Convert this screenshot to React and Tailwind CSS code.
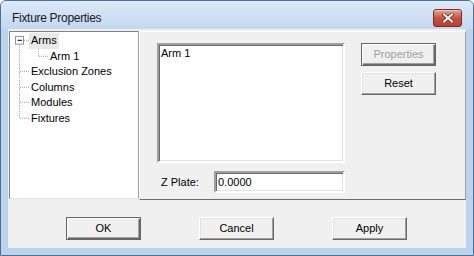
import React from "react";

// dotted connector drawn at the left of each tree row
const Connector = ({ kind }) => {
  const dot = { stroke: "#a0a0a0", strokeWidth: 1, strokeDasharray: "1 1", shapeRendering: "crispEdges" };
  if (kind === "root") {
    return (
      <svg width="19" height="16" viewBox="0 0 19 16" preserveAspectRatio="none" className="h-full shrink-0">
        <line x1="9.5" y1="12" x2="9.5" y2="16" style={dot} />
        <line x1="14" y1="7.5" x2="19" y2="7.5" style={dot} />
        <rect x="5.5" y="3.5" width="8" height="8" fill="white" stroke="#919191" shapeRendering="crispEdges" />
        <line x1="7.5" y1="7.5" x2="12" y2="7.5" stroke="black" shapeRendering="crispEdges" />
      </svg>
    );
  }
  if (kind === "child") {
    return (
      <svg width="38" height="16" viewBox="0 0 38 16" preserveAspectRatio="none" className="h-full shrink-0">
        <line x1="9.5" y1="0" x2="9.5" y2="16" style={dot} />
        <line x1="28.5" y1="0" x2="28.5" y2="8" style={dot} />
        <line x1="29" y1="7.5" x2="38" y2="7.5" style={dot} />
      </svg>
    );
  }
  return (
    <svg width="19" height="16" viewBox="0 0 19 16" preserveAspectRatio="none" className="h-full shrink-0">
      <line x1="9.5" y1="0" x2="9.5" y2={kind === "last" ? 8 : 16} style={dot} />
      <line x1="10" y1="7.5" x2="19" y2="7.5" style={dot} />
    </svg>
  );
};

const TreeRow = ({ kind, label, selected }) => (
  <div className="flex items-stretch h-[15.6px]">
    <Connector kind={kind} />
    <span className={"px-[2px] leading-[15.6px] whitespace-nowrap " + (selected ? "bg-[#e8e8e8]" : "")}>{label}</span>
  </div>
);

const Button = ({ children, disabled, isDefault }) => (
  <button
    className={
      "w-[75px] h-[23px] bg-[#f0f0f0] text-[11px] leading-none flex items-center justify-center " +
      (isDefault
        ? "border border-[#646464] shadow-[inset_1px_1px_0_#fff,inset_-1px_-1px_0_#696969,inset_-2px_-2px_0_#a0a0a0]"
        : "border border-t-white border-l-white border-b-[#696969] border-r-[#696969] shadow-[inset_-1px_-1px_0_#a0a0a0,inset_1px_1px_0_#e3e3e3]") +
      (disabled ? " text-[#a0a0a0]" : " text-black")
    }
  >
    {children}
  </button>
);

const sunken =
  "bg-white border-2 border-t-[#a0a0a0] border-l-[#a0a0a0] border-b-white border-r-white shadow-[inset_1px_1px_0_#696969,inset_-1px_-1px_0_#e3e3e3]";

const App = () => {
  return (
    <div className="w-[474px] h-[256px] flex flex-col bg-[#bcd3ed] border border-[#4f6f94] rounded-t-[6px] overflow-hidden font-['Liberation_Sans',Arial,sans-serif] text-[11px] text-black">
      {/* title bar */}
      <div className="h-[28px] shrink-0 flex items-start justify-between pl-[11px] pr-[11px] bg-gradient-to-b from-[#dce9f7] to-[#c3d8f0]">
        <span className="pt-[10px] text-[12px] leading-[15px] tracking-[-0.3px] text-[#1a1a1a]">Fixture Properties</span>
        <div className="mt-[8px] w-[29px] h-[18px] rounded-[3px] border border-[#7b2d25] bg-gradient-to-b from-[#e6a397] via-[#cc4f40] to-[#b8412f] flex items-center justify-center shadow-[inset_0_1px_0_#f2c3bb]">
          <svg width="12" height="10" viewBox="0 0 12 10">
            <path d="M2 1.5 L10 8.5 M10 1.5 L2 8.5" stroke="#6b2f29" strokeWidth="3.6" strokeLinecap="square" />
            <path d="M2 1.5 L10 8.5 M10 1.5 L2 8.5" stroke="#ffffff" strokeWidth="2" strokeLinecap="square" />
          </svg>
        </div>
      </div>

      {/* client area */}
      <div className="mx-[7px] h-[219px] shrink-0 bg-[#f0f0f0] flex flex-col">
        <div className="flex pt-[2px] pl-[1px] h-[171px]">
          {/* tree */}
          <div className="w-[130px] h-[168px] bg-white border border-t-[#828282] border-l-[#828282] border-b-[#e3e3e3] border-r-[#a0a0a0] pt-[1px]">
            <TreeRow kind="root" label="Arms" selected />
            <TreeRow kind="child" label="Arm 1" />
            <TreeRow kind="mid" label="Exclusion Zones" />
            <TreeRow kind="mid" label="Columns" />
            <TreeRow kind="mid" label="Modules" />
            <TreeRow kind="last" label="Fixtures" />
          </div>

          {/* right panel */}
          <div className="flex-1 h-[169px] border border-t-white border-l-white border-b-[#6d6d6d] border-r-[#a0a0a0] pl-[17px] pt-[11px] flex flex-col">
            <div className="flex">
              <div className={"w-[188px] h-[120px] px-[2px] pt-[1px] leading-[14px] " + sunken}>Arm 1</div>
              <div className="ml-[16px] flex flex-col gap-[6px]">
                <Button disabled isDefault>Properties</Button>
                <Button>Reset</Button>
              </div>
            </div>
            <div className="flex items-center mt-[8px]">
              <span className="w-[57px] pl-[4px]">Z Plate:</span>
              <div className={"w-[131px] h-[22px] px-[2px] flex items-center " + sunken}>0.0000</div>
            </div>
          </div>
        </div>

        {/* bottom buttons */}
        <div className="flex gap-[58px] pl-[58px] pt-[17px]">
          <Button isDefault>OK</Button>
          <Button>Cancel</Button>
          <Button>Apply</Button>
        </div>
      </div>
    </div>
  );
};

export default App;
